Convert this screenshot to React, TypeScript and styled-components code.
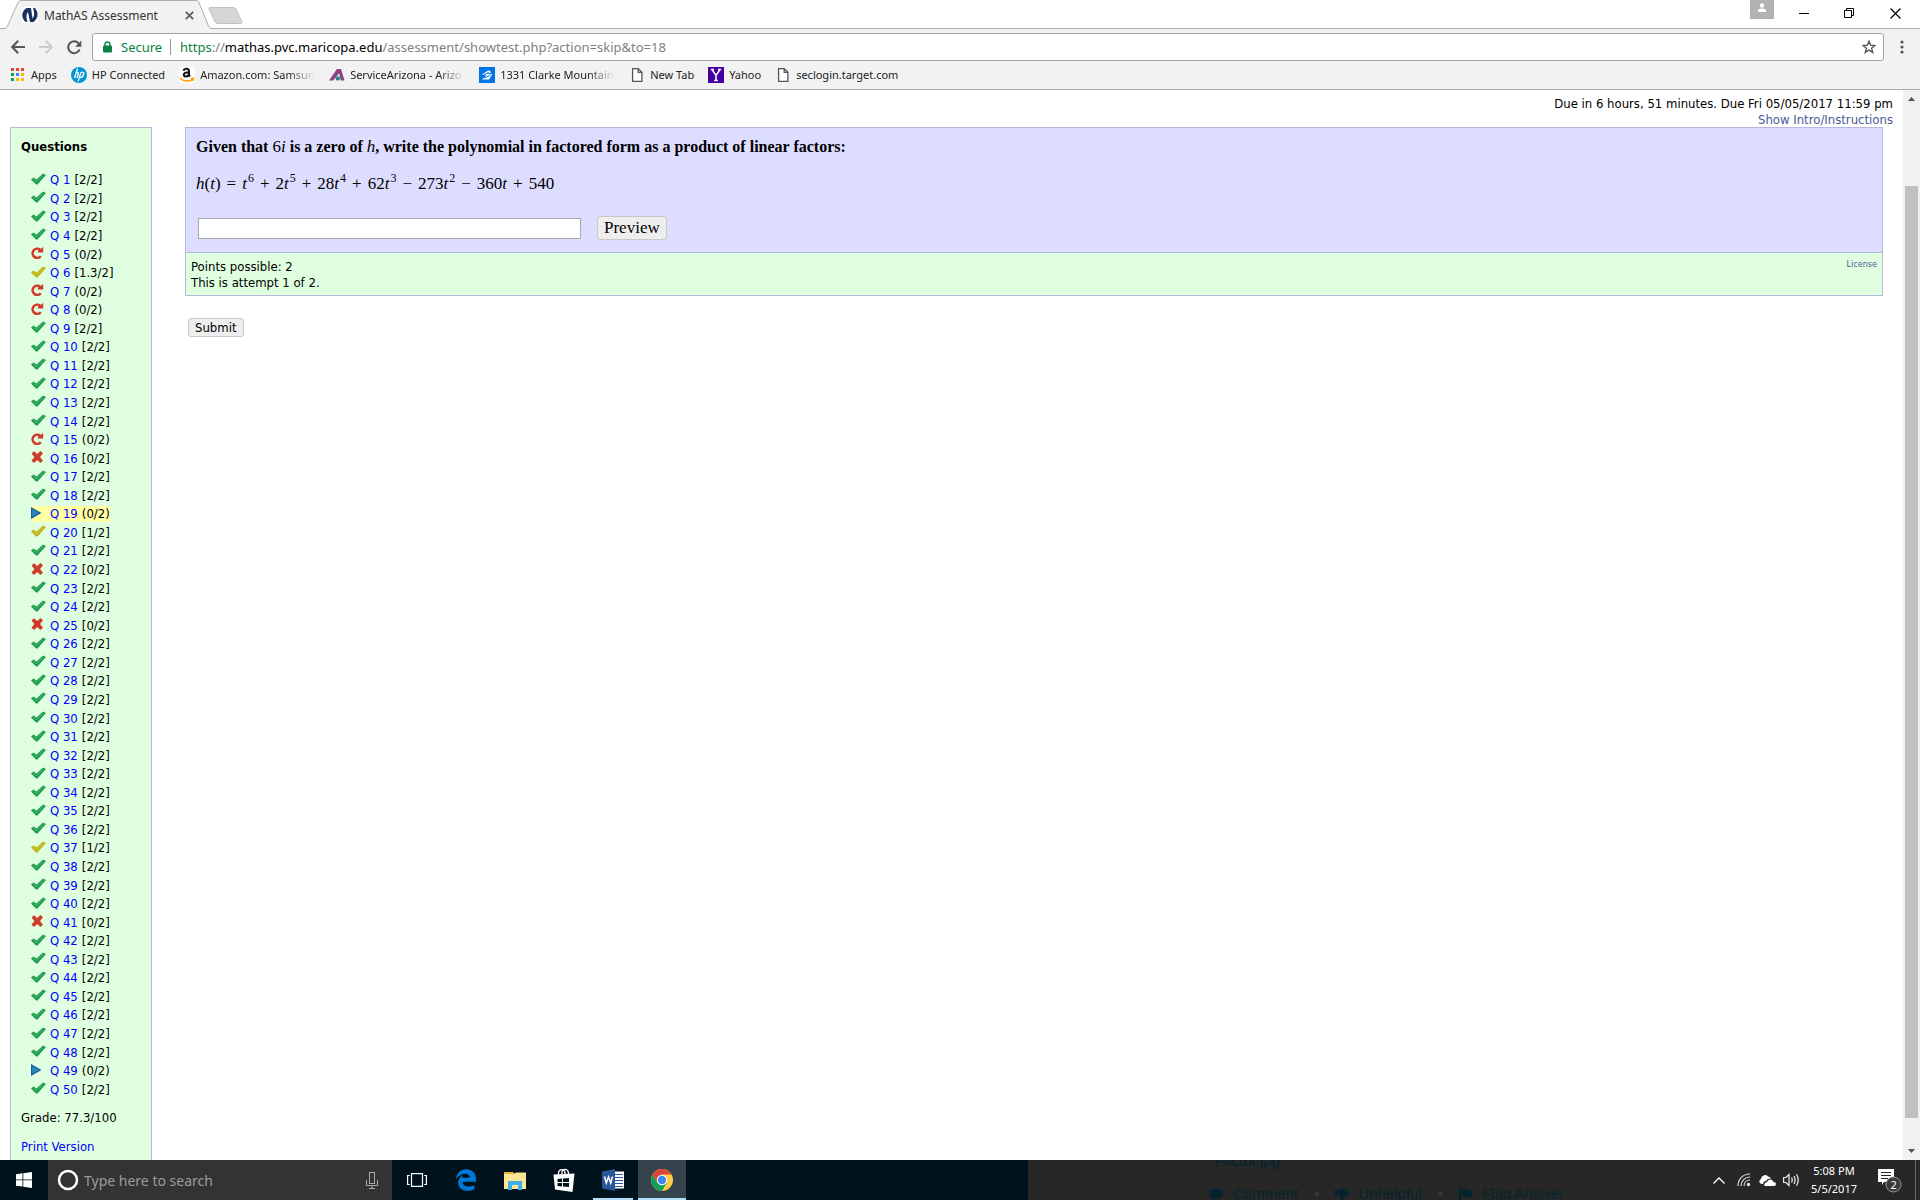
import React from 'react';
import styled, { createGlobalStyle } from 'styled-components';

const ui = '"Noto Sans", "Open Sans", sans-serif';
const page = '"DejaVu Sans Condensed", "DejaVu Sans", sans-serif';
const serif = '"Liberation Serif", serif';

const GlobalStyle = createGlobalStyle`
  * { box-sizing: border-box; }
  body { margin: 0; background: #fff; overflow: hidden; }
  button { font: inherit; color: inherit; cursor: pointer; }
  a { text-decoration: none; }
  svg { display: block; flex: none; }
`;

const Desktop = styled.div`
  display: flex;
  flex-direction: column;
  height: 100vh;
  font-family: ${ui};
  font-size: 12px;
  color: #000;
`;

/* Browser frame */

const TabStrip = styled.header`
  display: flex;
  height: 29px;
  border-bottom: 1px solid #adadad;
`;
const Tab = styled.div`
  position: relative;
  display: flex;
  align-items: center;
  width: 207px;
  height: 29px;
  margin-left: 5px;
  padding: 1px 18px 0 17px;
  color: #333;
`;
const TabShape = styled.svg`
  position: absolute;
  inset: 0;
`;
const TabTitle = styled.span`
  position: relative;
  flex: 1;
  margin-left: 6px;
  white-space: nowrap;
`;
const IconButton = styled.button<{ $w: number; $h?: number }>`
  position: relative;
  display: flex;
  align-items: center;
  justify-content: center;
  width: ${(p) => p.$w}px;
  height: ${(p) => p.$h ?? 28}px;
  padding: 0;
  border: 0;
  background: none;
`;
const FaviconSvg = styled.svg`
  position: relative;
`;
const WindowControls = styled.div`
  display: flex;
  margin-left: auto;
  padding-right: 2px;
`;
const Avatar = styled.button`
  display: flex;
  justify-content: center;
  width: 24px;
  height: 19px;
  margin-right: 7px;
  padding: 3px 0 0;
  border: 0;
  background: #b2b2b2;
`;
const Toolbar = styled.div`
  display: flex;
  align-items: center;
  height: 35px;
  padding: 1px 2px 0 4px;
  background: #f2f2f2;
`;
const Omnibox = styled.div`
  display: flex;
  align-items: center;
  flex: 1;
  height: 28px;
  margin-left: 4px;
  margin-right: 2px;
  padding: 0 7px 0 10px;
  border: 1px solid #a5a5a5;
  border-radius: 3px;
  background: #fff;
  font-size: 13px;
`;
const Secure = styled.span`
  width: 50px;
  margin-left: 9px;
  border-right: 1px solid #999;
  line-height: 16px;
  font-size: 13px;
  color: #0b8043;
`;
const Url = styled.span`
  flex: 1;
  margin-left: 9px;
  color: #808080;
  white-space: nowrap;
`;
const Scheme = styled.span`
  color: #0b8043;
`;
const Host = styled.span`
  color: #000;
`;
const Bookmarks = styled.nav`
  display: flex;
  align-items: center;
  gap: 14px;
  height: 26px;
  padding: 0 10px 4px;
  border-bottom: 1px solid #adadad;
  background: #f2f2f2;
  font-size: 11px;
`;
const Bookmark = styled.a`
  display: flex;
  align-items: center;
  gap: 5px;
  color: #222;
`;
const BookmarkText = styled.span<{ $fade?: boolean }>`
  white-space: nowrap;
  ${(p) => p.$fade && 'width: 115px; mask-image: linear-gradient(to right, #000 88px, transparent);'}
`;

/* Web page */

const Viewport = styled.div`
  display: flex;
  flex: 1;
  min-height: 0;
`;
const PageArea = styled.main`
  flex: 1;
  min-width: 0;
  overflow: hidden;
  padding: 6px 10px 0;
  font-family: ${page};
  font-size: 13px;
  line-height: 16px;
`;
const DueInfo = styled.div`
  height: 31px;
  text-align: right;
`;
const MutedLink = styled.a`
  color: #4a5a96;
`;
const Columns = styled.div`
  display: flex;
  align-items: flex-start;
  gap: 33px;
`;
const Sidebar = styled.aside`
  width: 142px;
  padding: 11px 10px;
  border: 1px solid #b8b8dc;
  background: #e0ffe0;
`;
const SidebarTitle = styled.h2`
  margin: 0 0 16px;
  font-size: 13px;
`;
const QuestionList = styled.ul`
  display: grid;
  grid-auto-rows: 1fr;
  align-items: center;
  height: 928px;
  margin: 0 0 11px;
  padding: 0 0 0 10px;
  list-style: none;
`;
const QuestionItem = styled.li<{ $current?: boolean }>`
  display: flex;
  align-items: center;
  gap: 4px;
  justify-self: start;
  height: 16px;
  white-space: nowrap;
  background: ${(p) => (p.$current ? '#ffffa6' : 'none')};
`;
const StatusSlot = styled.span`
  width: 15px;
  padding-bottom: 3px;
`;
const QuestionLink = styled.a`
  color: #00f;
`;
const SidebarLine = styled.p`
  margin: 0 0 13px;
`;
const Content = styled.form`
  flex: 1;
  margin-right: 10px;
`;
const QuestionCard = styled.section`
  border: 1px solid #b8b8dc;
`;
const QuestionBody = styled.div`
  padding: 9px 10px 12px;
  border-bottom: 1px solid #b8b8dc;
  background: #ddf;
  font-family: ${serif};
  font-size: 16px;
  line-height: 20px;
`;
const Prompt = styled.p`
  margin: 0 0 17px;
  font-weight: 700;
`;
const Formula = styled.p`
  margin: 0 0 22px;
  font-size: 17px;
`;
const Variable = styled.i`
  font-weight: 400;
  font-size: 17px;
`;
const Numeral = styled.span`
  font-weight: 400;
  font-size: 17px;
`;
const Operator = styled.span`
  margin: 0 6px;
`;
const Exponent = styled.sup`
  margin-left: 1px;
  font-size: 12px;
  line-height: 0;
`;
const AnswerRow = styled.div`
  display: flex;
  align-items: center;
  gap: 16px;
  padding-left: 2px;
`;
const AnswerInput = styled.input`
  width: 383px;
  height: 21px;
  border: 1px solid #a9a9a9;
  background: #fff;
`;
const PushButton = styled.button<{ $large?: boolean }>`
  height: ${(p) => (p.$large ? 24 : 19)}px;
  padding: 0 6px;
  border: 1px solid #c8c8c8;
  border-radius: 3px;
  background: #eee;
  font-size: ${(p) => (p.$large ? 17 : 13)}px;
  line-height: 16px;
`;
const QuestionFooter = styled.div`
  display: flex;
  justify-content: space-between;
  padding: 6px 5px 4px;
  background: #e0ffe0;
`;
const LicenseLink = styled(MutedLink)`
  font-size: 9px;
  line-height: 10px;
`;
const SubmitRow = styled.div`
  padding: 22px 3px 0;
`;
const ScrollTrack = styled.div`
  display: flex;
  flex-direction: column;
  align-items: center;
  width: 17px;
  padding: 7px 0;
  background: #f1f1f1;
`;
const ScrollThumb = styled.div`
  flex: 932;
  width: 13px;
  background: #c1c1c1;
`;
const ScrollGap = styled.div<{ $grow: number }>`
  flex: ${(p) => p.$grow};
`;

/* Taskbar */

const Taskbar = styled.footer`
  display: flex;
  flex: none;
  height: 40px;
  background: #00121b;
  color: #fff;
`;
const TaskSearch = styled.label`
  display: flex;
  align-items: center;
  width: 344px;
  margin-right: 1px;
  padding: 0 14px 0 9px;
  background: #333;
`;
const SearchInput = styled.input`
  flex: 1;
  min-width: 0;
  padding: 0;
  margin-left: 5px;
  border: 0;
  outline: 0;
  background: none;
  font: 14px ${ui};
  &::placeholder { color: #9c9c9c; opacity: 1; }
`;
const TaskButton = styled.button<{ $state?: 'open' | 'active' }>`
  display: flex;
  align-items: center;
  justify-content: center;
  width: 48px;
  margin-right: 1px;
  padding: 0;
  border: 0;
  background: ${(p) =>
    p.$state === 'active'
      ? 'linear-gradient(#b2dcf8, #b2dcf8) bottom / 48px 2px no-repeat #35434c'
      : p.$state === 'open'
        ? 'linear-gradient(#b2dcf8, #b2dcf8) bottom / 40px 2px no-repeat'
        : 'none'};
`;
const Behind = styled.div`
  flex: 1;
  overflow: hidden;
  margin-left: 341px;
  padding-left: 181px;
  background: #272727;
  color: #03242e;
  font-family: "Liberation Sans", sans-serif;
  font-size: 15px;
`;
const BehindFile = styled.div`
  height: 24px;
  padding-left: 5px;
  line-height: 2px;
`;
const BehindActions = styled.div`
  display: flex;
  align-items: center;
  gap: 10px;
  line-height: 20px;
  white-space: nowrap;
`;
const BehindDot = styled.span`
  margin: 0 6px;
  color: #3a3a3a;
`;
const Tray = styled.div`
  display: flex;
  align-items: center;
  background: #272727;
`;
const Clock = styled.time`
  width: 60px;
  font-size: 11px;
  line-height: 18px;
  text-align: center;
`;
const PeekDesktop = styled.button`
  width: 5px;
  height: 40px;
  padding: 0;
  border: 0;
  border-left: 1px solid #6a6a6a;
  background: none;
`;

type Status = 'done' | 'partial' | 'retry' | 'wrong' | 'next';

const special: Record<number, [Status, string]> = {
  5: ['retry', '(0/2)'], 6: ['partial', '[1.3/2]'], 7: ['retry', '(0/2)'], 8: ['retry', '(0/2)'],
  15: ['retry', '(0/2)'], 16: ['wrong', '[0/2]'], 19: ['next', '(0/2)'], 20: ['partial', '[1/2]'],
  22: ['wrong', '[0/2]'], 25: ['wrong', '[0/2]'], 37: ['partial', '[1/2]'], 41: ['wrong', '[0/2]'],
  49: ['next', '(0/2)'],
};
const questions = Array.from({ length: 50 }, (_, i) => {
  const [status, score] = special[i + 1] ?? (['done', '[2/2]'] as [Status, string]);
  return { n: i + 1, status, score };
});

function StatusIcon({ status }: { status: Status }) {
  if (status === 'done' || status === 'partial') {
    const c = status === 'done' ? '#1f9d4d' : '#c0b414';
    return (
      <svg width="15" height="12" viewBox="0 0 15 12">
        <path d="M0 6.5 2.5 4.5 5.5 6.5 12 0.5 15 2 6.5 11.5 5 11.5Z" fill={c} />
        <path d="M2.5 6.5 5.6 8.6 12.5 2.2" stroke="#fff" strokeOpacity=".25" fill="none" />
      </svg>
    );
  }
  if (status === 'retry') {
    return (
      <svg width="13" height="12" viewBox="0 0 13 12">
        <path d="M9.800 9.200A4.600 4.600 0 1 1 9 2.600" fill="none" stroke="#d03a28" strokeWidth="2.600" />
        <path d="M12.200 0V5.600H6.800V4Z" fill="#d03a28" />
      </svg>
    );
  }
  if (status === 'wrong') {
    return (
      <svg width="13" height="12" viewBox="0 0 13 12">
        <path d="M0.5 2.4 3 0.3 6.2 3 9.5 0 12 2.2 9 6 12 9.8 9.5 12 6.2 9 3 12 0.5 9.8 3.4 6Z" fill="#d03a28" />
      </svg>
    );
  }
  return (
    <svg width="11" height="12" viewBox="0 0 11 12">
      <path d="M0 0 10.5 6 0 12Z" fill="#14639b" />
      <path d="M1.2 2.2 8 6 1.2 9.5Z" fill="#2f86b8" />
    </svg>
  );
}

const DocIcon = () => (
  <svg width="16" height="16" viewBox="0 0 16 16" fill="#fff" stroke="#555" strokeWidth="1.3">
    <path d="M3.6 1.6H9.2L12.9 5.3V14.4H3.6ZM9.2 1.6V5.3H12.9" />
  </svg>
);
const AppsIcon = () => {
  const c = ['#ea4335', '#ea4335', '#ea4335', '#0f9d58', '#4285f4', '#fbbc05', '#0f9d58', '#fbbc05', '#fbbc05'];
  return (
    <svg width="16" height="16" viewBox="0 0 16 16">
      {c.map((f, i) => <rect key={i} x={1 + (i % 3) * 5} y={1 + Math.floor(i / 3) * 5} width="3" height="3" fill={f} />)}
    </svg>
  );
};
const HpIcon = () => (
  <svg width="16" height="16" viewBox="0 0 16 16">
    <circle cx="8" cy="8" r="8" fill="#0096d6" />
    <path d="M6.6 1.5 3.5 11M4.9 6.3C7 4.8 7.9 5.4 7.2 7.2L6 11M12.2 5.3C10.4 4.9 9.9 5.4 9.5 6.7L7.1 14.4M12.2 5.3C13.1 5.4 12.9 6.2 12.4 7.8 11.7 10.3 10.8 10.9 8.4 10.6" fill="none" stroke="#fff" strokeWidth="1.3" />
  </svg>
);
const AmazonIcon = () => (
  <svg width="16" height="16" viewBox="0 0 16 16">
    <rect width="16" height="16" rx="2" fill="#fff" />
    <path d="M4.7 3.8C5.2 1 10 1 10 4.1V8.3L11 9.5M10 5.2C6.5 5.3 4.8 5.9 4.8 7.8 4.8 10.4 8.8 10 10 7.2" fill="none" stroke="#111" strokeWidth="2" />
    <path d="M1 11.3C5 14.9 10.5 14.6 13.6 12.3M11.8 11.4 14.6 11.2 14 13.8" fill="none" stroke="#f90" strokeWidth="1.5" />
  </svg>
);
const ArizonaIcon = () => (
  <svg width="16" height="16" viewBox="0 0 16 16">
    <path d="M0 13.5 8 2H12L15.5 13.5H11.8L10 6.2 4.2 13.5Z" fill="#8b4480" />
    <circle cx="8.8" cy="11.4" r="2.2" fill="#1e8b86" />
  </svg>
);
const ZillowIcon = () => (
  <svg width="16" height="16" viewBox="0 0 16 16">
    <path fill="#0074e4" d="M0 0H16V16H0z" />
    <path d="M3 7.6 9.5 3.3 12.5 5.2 7.8 7 13.4 7.2 10 12.6 3 12.4 7.5 8.5Z" fill="#fff" />
    <path d="M5 11 11.5 8.4M4.7 8 9.8 5.2" stroke="#0074e4" />
  </svg>
);
const YahooIcon = () => (
  <svg width="16" height="16" viewBox="0 0 16 16">
    <path fill="#4700a0" d="M0 0H16V16H0z" />
    <path d="M4 2.5 8 8.5 12 2.5M8 8V13.5M2.8 2.5H6M10 2.5H13.2M6.2 13.5H9.8" fill="none" stroke="#fff" strokeWidth="1.5" />
  </svg>
);

const bookmarks: [string, React.ReactNode, boolean?][] = [
  ['Apps', <AppsIcon />],
  ['HP Connected', <HpIcon />],
  ['Amazon.com: Samsun', <AmazonIcon />, true],
  ['ServiceArizona - Arizo', <ArizonaIcon />, true],
  ['1331 Clarke Mountain', <ZillowIcon />, true],
  ['New Tab', <DocIcon />],
  ['Yahoo', <YahooIcon />],
  ['seclogin.target.com', <DocIcon />],
];

const Term = ({ c, p }: { c?: string; p?: string }) => (
  <>{c}<Variable>t</Variable>{p && <Exponent>{p}</Exponent>}</>
);

function BrowserFrame() {
  return (
    <>
      <TabStrip>
        <Tab>
          <TabShape width="207" height="29" viewBox="0 0 207 29">
            <path d="M0 29V28.5C2 27.5 2 27 3 25L13 2.5Q14 .5 16 .5H191Q193 .5 194 2.5L203 25C204 27 204.500 28 207 28.500V29Z" fill="#f2f2f2" />
            <path d="M0 28.500C2 27.500 2 27 3 25L13 2.500Q14 .5 16 .5H191Q193 .5 194 2.500L203 25C204 27 204.500 28 207 28.500" fill="none" stroke="#adadad" />
          </TabShape>
          <FaviconSvg width="16" height="16" viewBox="0 0 16 16">
            <path d="M0 0H16V16H0z" fill="#fff" />
            <path d="M5 1 9 1 10.500 11.500C12.500 9.500 12.500 5 11 1L12.500.8C15.500 3.500 16.500 8 14.500 11.500 13.500 13.500 12 14.800 10.500 15.200L8 15 6 5C4 7 4.200 11 5.500 15L3.500 14.800C.8 12.500-.5 9 .8 5.500 1.800 2.800 3.500 1.500 5 1Z" fill="#16305f" />
          </FaviconSvg>
          <TabTitle>MathAS Assessment</TabTitle>
          <IconButton $w={9} $h={16} aria-label="Close tab">
            <svg width="9" height="9" viewBox="0 0 9 9"><path d="M.8.8 8.200 8.200M8.200.8.8 8.200" stroke="#5a5a5a" strokeWidth="1.700" /></svg>
          </IconButton>
        </Tab>
        <IconButton $w={28} aria-label="New tab">
          <svg width="36" height="28" viewBox="0 0 36 28">
            <path d="M2 7.500H25Q27 7.500 28 9L34 22Q34.500 23.500 33 23.500H10Q8 23.500 7 22L1 9Q.5 7.500 2 7.500Z" fill="#d6d6d6" stroke="#c2c2c2" />
          </svg>
        </IconButton>
        <WindowControls>
          <Avatar aria-label="Profile">
            <svg width="10" height="10" viewBox="0 0 10 10" fill="#fff"><circle cx="5" cy="2.500" r="2.200" /><path d="M1 9V7.500Q1 5.500 5 5.500T9 7.500V9Z" /></svg>
          </Avatar>
          <IconButton $w={45} $h={26} aria-label="Minimize"><svg width="10" height="10"><path d="M0 5.500H10" stroke="#000" /></svg></IconButton>
          <IconButton $w={46} $h={26} aria-label="Restore"><svg width="10" height="10" fill="none" stroke="#000"><path d="M.5 2.500H7.500V9.500H.5ZM2.500 2.500V.5H9.500V7.500H7.500" /></svg></IconButton>
          <IconButton $w={46} $h={26} aria-label="Close"><svg width="11" height="11"><path d="M.5.5 10.500 10.500M10.500.5.5 10.500" stroke="#000" strokeWidth="1.200" /></svg></IconButton>
        </WindowControls>
      </TabStrip>
      <Toolbar>
        <IconButton $w={28} aria-label="Back"><svg width="14" height="14" viewBox="0 0 14 14" fill="none" stroke="#555" strokeWidth="2"><path d="M14 7H1.500M7.200.8 1.200 7 7.200 13.200" /></svg></IconButton>
        <IconButton $w={28} aria-label="Forward"><svg width="14" height="14" viewBox="0 0 14 14" fill="none" stroke="#ccc" strokeWidth="2"><path d="M0 7H12.500M6.800.8 12.800 7 6.800 13.200" /></svg></IconButton>
        <IconButton $w={28} aria-label="Reload"><svg width="15" height="15" viewBox="0 0 15 15"><path d="M12.600 9.500A5.900 5.900 0 1 1 11.600 3.400" fill="none" stroke="#555" strokeWidth="2" /><path d="M14.300.6V6.700H8.200Z" fill="#555" /></svg></IconButton>
        <Omnibox>
          <svg width="9" height="12" viewBox="0 0 9 12"><rect y="4.500" width="9" height="7" rx="1" fill="#0b8043" /><path d="M2 5V3.200Q2 1 4.500 1T7 3.200V5" fill="none" stroke="#0b8043" strokeWidth="1.400" /></svg>
          <Secure>Secure</Secure>
          <Url><Scheme>https</Scheme>://<Host>mathas.pvc.maricopa.edu</Host>/assessment/showtest.php?action=skip&amp;to=18</Url>
          <IconButton $w={14} aria-label="Bookmark this page"><svg width="14" height="14" viewBox="0 0 14 14"><path d="M7 1.300 8.600 5.200 12.900 5.500 9.600 8.200 10.700 12.400 7 10.100 3.300 12.400 4.400 8.200 1.100 5.500 5.400 5.200Z" fill="none" stroke="#555" strokeWidth="1.400" /></svg></IconButton>
        </Omnibox>
        <IconButton $w={32} aria-label="Menu"><svg width="4" height="14" viewBox="0 0 4 14" fill="#555"><circle cx="2" cy="2" r="1.600" /><circle cx="2" cy="7" r="1.600" /><circle cx="2" cy="12" r="1.600" /></svg></IconButton>
      </Toolbar>
      <Bookmarks aria-label="Bookmarks">
        {bookmarks.map(([name, icon, fade]) => (
          <Bookmark href="#" key={name}>{icon}<BookmarkText $fade={fade}>{name}</BookmarkText></Bookmark>
        ))}
      </Bookmarks>
    </>
  );
}

function WindowsTaskbar() {
  return (
    <Taskbar>
      <IconButton $w={48} $h={40} aria-label="Start">
        <svg width="16" height="16" viewBox="0 0 16 16" fill="#fff"><path d="M0 2.200 6.500 1.300V7.500H0ZM7.300 1.200 16 0V7.500H7.300ZM0 8.300H6.500V14.600L0 13.700ZM7.300 8.300H16V16L7.300 14.800Z" /></svg>
      </IconButton>
      <TaskSearch aria-label="Search">
        <svg width="22" height="22" viewBox="0 0 22 22"><circle cx="11" cy="11" r="9" fill="none" stroke="#fff" strokeWidth="2.500" /></svg>
        <SearchInput placeholder="Type here to search" />
        <svg width="12" height="17" viewBox="0 0 12 17" fill="none" stroke="#aaa"><rect x="3.500" y=".5" width="5" height="11" /><path d="M.5 8V13.500H11.500V8M6 13.500V16.500M3 16.500H9" /></svg>
      </TaskSearch>
      <TaskButton aria-label="Task view">
        <svg width="20" height="14" viewBox="0 0 20 14" fill="none" stroke="#fff" strokeWidth="1.200"><path d="M4.500.6H15.500V13.400H4.500ZM2.800 2.500H.6V11.500H2.800M17.200 2.500H19.400V11.500H17.200" /></svg>
      </TaskButton>
      <TaskButton aria-label="Edge">
        <svg width="20" height="22" viewBox="0 0 20 22"><path d="M0 9.800C.8 3.800 4.800.2 10.200.2 16.300.2 20 4.500 20 10V12.700H6.600C6.800 18.200 13.800 18.600 18.400 15.900V20.200C11.300 23.800 2.300 21.500 2.100 13.800 2 10.300 4 7.700 7.200 6.200 6.600 7 6.300 7.800 6.200 8.800H13.700C13.800 2.800 5.500 3.400 0 9.800Z" fill="#0078d7" /></svg>
      </TaskButton>
      <TaskButton aria-label="File Explorer">
        <svg width="22" height="19" viewBox="0 0 22 19"><path d="M0 1H9L11 3H0Z" fill="#e8b53a" /><path d="M0 3H10L12 1.500H22V18H0Z" fill="#fce596" /><path d="M4 10H18V19H14V14H8V19H4Z" fill="#3db1e6" /></svg>
      </TaskButton>
      <TaskButton aria-label="Store">
        <svg width="22" height="24" viewBox="0 0 22 24"><path d="M5.500 7V5C5.500.5 12 .5 12 5V6M9 6V4.500C9 0 15.500.5 15.500 5.500V7" fill="none" stroke="#fff" strokeWidth="1.300" /><path d="M.5 6.500 21.500 5.500 19.500 24 2 21.500Z" fill="#fff" /><path d="M4.500 11 9 10.600V14H4.500ZM10 10.500 16 10V14H10ZM4.500 15H9V18.400L4.500 18ZM10 15H16V19L10 18.500Z" fill="#00121b" /></svg>
      </TaskButton>
      <TaskButton $state="open" aria-label="Word">
        <svg width="22" height="22" viewBox="0 0 22 22"><path fill="#fff" d="M12 2.500H22V19.500H12z" /><path d="M13 5.500H21M13 8.500H21M13 11.500H21M13 14.500H21M13 17.500H21" stroke="#2b579a" /><path d="M0 2.500 13 0V22L0 19.500Z" fill="#2b579a" /><path d="M2.500 7.500 4.300 14 6.500 8 8.700 14 10.500 7.500" fill="none" stroke="#fff" strokeWidth="1.500" /></svg>
      </TaskButton>
      <TaskButton $state="active" aria-label="Chrome">
        <svg width="22" height="22" viewBox="0 0 22 22"><circle cx="11" cy="11" r="11" fill="#fc4" /><path d="M1.500 5.500A11 11 0 0 1 20.500 5.500H11L6.200 13.700Z" fill="#db4437" /><path d="M1.500 5.500A11 11 0 0 0 11 22L15.800 13.700H6.200Z" fill="#0f9d58" /><circle cx="11" cy="11" r="5.200" fill="#fff" /><circle cx="11" cy="11" r="4.200" fill="#4285f4" /></svg>
      </TaskButton>
      <Behind>
        <BehindFile>Factor.jpg</BehindFile>
        <BehindActions>
          <svg width="14" height="12" viewBox="0 0 14 12" fill="#03242e"><ellipse cx="7" cy="5.500" rx="7" ry="5.500" /><path d="M2 7V12L6 10Z" /></svg>
          Comment<BehindDot>•</BehindDot>
          <svg width="13" height="13" viewBox="0 0 13 13" fill="#03242e"><path d="M0 1H3V8H0ZM4 1 10 0 13 3V8H8L9 12 7 13 4 7Z" /></svg>
          Unhelpful<BehindDot>•</BehindDot>
          <svg width="13" height="13" viewBox="0 0 13 13" fill="#03242e"><path d="M0 0H2V13H0ZM3 2Q6 0 8 2T13 2V9Q10 10 8 9T3 9Z" /></svg>
          Flag Answer
        </BehindActions>
      </Behind>
      <Tray>
        <IconButton $w={26} $h={40} aria-label="Show hidden icons"><svg width="12" height="7"><path d="M.5 6.500 6 1 11.500 6.500" fill="none" stroke="#fff" strokeWidth="1.300" /></svg></IconButton>
        <IconButton $w={24} $h={40} aria-label="Network"><svg width="14" height="14" viewBox="0 0 14 14" fill="none" stroke="#ddd" strokeWidth="1.200"><path d="M1 13C1 6 6 1 13 1M4 13C4 8 8 4 13 4M7 13C7 9.500 9.500 7 13 7" /><circle cx="11.500" cy="11.500" r="1.200" fill="#fff" /></svg></IconButton>
        <IconButton $w={22} $h={40} aria-label="OneDrive"><svg width="17" height="11" viewBox="0 0 17 11" fill="#fff"><path d="M1 8A2.500 2.500 0 0 1 2 4 4 4 0 0 1 9 1.500 4 4 0 0 1 12 3.500Q8 3 7 6 4.500 6 4 9 2 9.300 1 8Z" /><path d="M5.500 11Q4.500 8 8 7 9 4 12 4.500 14 5 14.500 7 17 7 17 9T15 11Z" /></svg></IconButton>
        <IconButton $w={26} $h={40} aria-label="Volume"><svg width="17" height="14" viewBox="0 0 17 14" fill="none" stroke="#eee" strokeWidth="1.200"><path d="M.6 4.500H3L6 1.500V12.500L3 9.500H.6ZM8.500 4.500Q10 7 8.500 9.500M11 3Q13.200 7 11 11M13.500 1.200Q17 7 13.500 12.800" /></svg></IconButton>
        <Clock>5:08 PM<br />5/5/2017</Clock>
        <IconButton $w={51} $h={40} aria-label="2 notifications">
          <svg width="26" height="26" viewBox="0 0 26 26"><path d="M1 2H17V15H7L5 18V15H1Z" fill="#fff" /><path d="M4 5.500H14M4 8.500H14M4 11.500H11" stroke="#272727" /><circle cx="16.500" cy="17.500" r="7.500" fill="#3a3a3a" stroke="#999" /><text x="13.500" y="22" fill="#fff" fontFamily="Noto Sans, sans-serif" fontSize="11">2</text></svg>
        </IconButton>
        <PeekDesktop aria-label="Show desktop" />
      </Tray>
    </Taskbar>
  );
}

export default function App() {
  return (
    <Desktop>
      <GlobalStyle />
      <BrowserFrame />
      <Viewport>
        <PageArea>
          <DueInfo>Due in 6 hours, 51 minutes. Due Fri 05/05/2017 11:59 pm<br /><MutedLink href="#">Show Intro/Instructions</MutedLink></DueInfo>
          <Columns>
            <Sidebar>
              <SidebarTitle>Questions</SidebarTitle>
              <QuestionList>
                {questions.map((q) => (
                  <QuestionItem key={q.n} $current={q.n === 19}>
                    <StatusSlot><StatusIcon status={q.status} /></StatusSlot>
                    <QuestionLink href="#">Q {q.n}</QuestionLink> {q.score}
                  </QuestionItem>
                ))}
              </QuestionList>
              <SidebarLine>Grade: 77.3/100</SidebarLine>
              <SidebarLine><QuestionLink href="#">Print Version</QuestionLink></SidebarLine>
            </Sidebar>
            <Content onSubmit={(e) => e.preventDefault()}>
              <QuestionCard>
                <QuestionBody>
                  <Prompt>Given that <Numeral>6</Numeral><Variable>i</Variable> is a zero of <Variable>h</Variable>, write the polynomial in factored form as a product of linear factors:</Prompt>
                  <Formula>
                    <Variable>h</Variable>(<Variable>t</Variable>)<Operator>=</Operator><Term p="6" /><Operator>+</Operator><Term c="2" p="5" /><Operator>+</Operator><Term c="28" p="4" /><Operator>+</Operator><Term c="62" p="3" /><Operator>−</Operator><Term c="273" p="2" /><Operator>−</Operator><Term c="360" /><Operator>+</Operator>540
                  </Formula>
                  <AnswerRow>
                    <AnswerInput aria-label="Answer" />
                    <PushButton type="button" $large>Preview</PushButton>
                  </AnswerRow>
                </QuestionBody>
                <QuestionFooter>
                  <div>Points possible: 2<br />This is attempt 1 of 2.</div>
                  <LicenseLink href="#">License</LicenseLink>
                </QuestionFooter>
              </QuestionCard>
              <SubmitRow><PushButton type="submit">Submit</PushButton></SubmitRow>
            </Content>
          </Columns>
        </PageArea>
        <ScrollTrack>
          <svg width="7" height="4"><path d="M0 4 3.500 0 7 4Z" fill="#505050" /></svg>
          <ScrollGap $grow={85} /><ScrollThumb /><ScrollGap $grow={31} />
          <svg width="7" height="4"><path d="M0 0 3.500 4 7 0Z" fill="#505050" /></svg>
        </ScrollTrack>
      </Viewport>
      <WindowsTaskbar />
    </Desktop>
  );
}
